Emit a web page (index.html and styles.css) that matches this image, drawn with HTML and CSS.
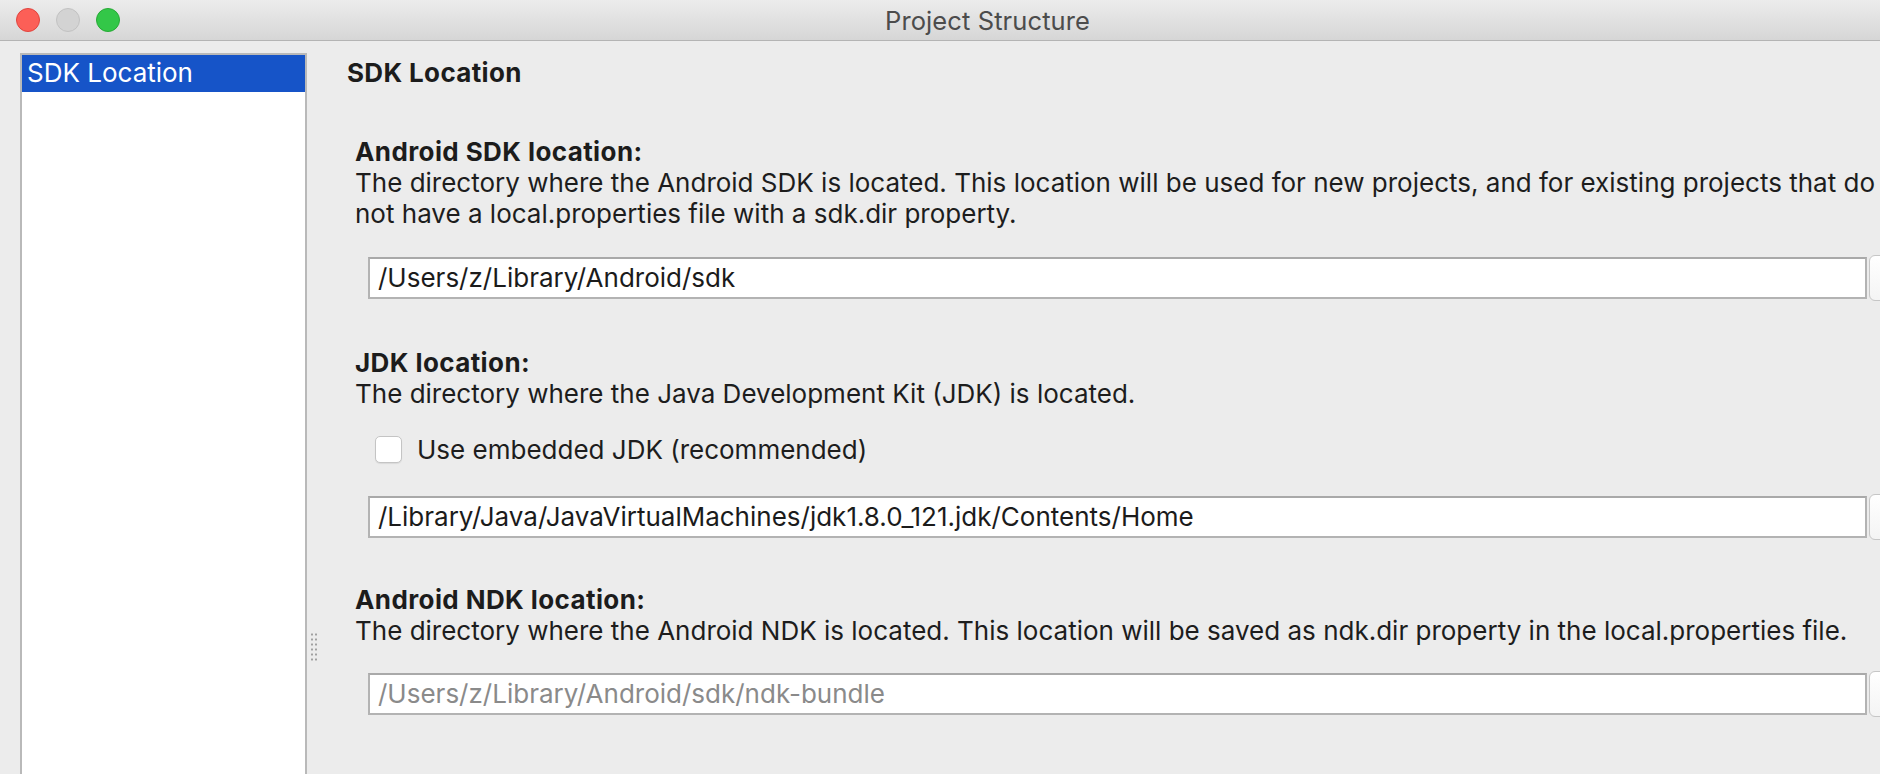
FILE: index.html
```html
<!DOCTYPE html>
<html lang="en">
<head>
<meta charset="utf-8">
<title>Project Structure</title>
<link rel="stylesheet" href="styles.css">
</head>
<body>
<div class="window">
  <header class="titlebar">
    <div class="lights">
      <span class="light light-close"></span>
      <span class="light light-min"></span>
      <span class="light light-max"></span>
    </div>
    <div class="title">Project Structure</div>
  </header>
  <div class="main">
    <aside class="sidebar">
      <div class="list-item selected">SDK Location</div>
    </aside>
    <div class="splitter"><div class="grip"></div></div>
    <section class="content">
      <h1 class="page-title">SDK Location</h1>

      <div class="group group-sdk">
        <h2 class="group-title">Android SDK location:</h2>
        <p class="group-desc">The directory where the Android SDK is located. This location will be used for new projects, and for existing projects that do<br>not have a local.properties file with a sdk.dir property.</p>
        <div class="field-row field-row-sdk">
          <div class="input">/Users/z/Library/Android/sdk</div>
          <div class="browse"></div>
        </div>
      </div>

      <div class="group group-jdk">
        <h2 class="group-title">JDK location:</h2>
        <p class="group-desc">The directory where the Java Development Kit (JDK) is located.</p>
        <label class="check-row">
          <span class="checkbox"></span>
          <span class="check-label">Use embedded JDK (recommended)</span>
        </label>
        <div class="field-row field-row-jdk">
          <div class="input">/Library/Java/JavaVirtualMachines/jdk1.8.0_121.jdk/Contents/Home</div>
          <div class="browse"></div>
        </div>
      </div>

      <div class="group group-ndk">
        <h2 class="group-title">Android NDK location:</h2>
        <p class="group-desc">The directory where the Android NDK is located. This location will be saved as ndk.dir property in the local.properties file.</p>
        <div class="field-row field-row-ndk">
          <div class="input input-muted">/Users/z/Library/Android/sdk/ndk-bundle</div>
          <div class="browse"></div>
        </div>
      </div>
    </section>
  </div>
</div>
</body>
</html>
```

FILE: styles.css
```css
* {
  box-sizing: border-box;
}

html, body {
  margin: 0;
  padding: 0;
  width: 1880px;
  height: 774px;
  overflow: hidden;
  background: #ececec;
}

body {
  font-family: Inter, "Liberation Sans", Arial, sans-serif;
  font-size: 26px;
  line-height: 31px;
  color: #1d1d1d;
}

.window {
  display: flex;
  flex-direction: column;
  width: 1880px;
  height: 774px;
}

/* ---------- Title bar ---------- */
.titlebar {
  flex: 0 0 41px;
  display: flex;
  align-items: center;
  background: linear-gradient(#ececec, #d6d6d6);
  border-bottom: 1px solid #b4b4b4;
}

.lights {
  display: flex;
  gap: 16px;
  margin-left: 16px;
  margin-top: -1px;
}

.light {
  width: 24px;
  height: 24px;
  border-radius: 50%;
}

.light-close {
  background: #fc5f57;
  border: 1px solid #e0443e;
}

.light-min {
  background: #d3d3d3;
  border: 1px solid #c2c2c2;
}

.light-max {
  background: #33c748;
  border: 1px solid #27aa35;
}

.title {
  margin-left: 765px;
  font-size: 25.5px;
  color: #4c4c4c;
  letter-spacing: 0.1px;
}

/* ---------- Main area ---------- */
.main {
  flex: 1;
  display: flex;
  min-height: 0;
}

.sidebar {
  flex: 0 0 287px;
  margin-left: 20px;
  margin-top: 12px;
  background: #ffffff;
  border: 2px solid #b9b9b9;
  border-bottom: none;
}

.list-item {
  height: 37px;
  padding-left: 5px;
  line-height: 36px;
  white-space: nowrap;
}

.list-item.selected {
  background: #1654c8;
  color: #ffffff;
}

.splitter {
  flex: 0 0 40px;
}

.grip {
  width: 9px;
  height: 31px;
  margin-top: 591px;
  margin-left: 3px;
  background-image: radial-gradient(circle, #a0a0a0 0.9px, transparent 1.3px);
  background-size: 4px 5px;
}

.content {
  flex: 0 0 1600px;
  padding-top: 16px;
}

.page-title {
  margin: 0;
  font-size: 26px;
  line-height: 31px;
  font-weight: 700;
  letter-spacing: 0.35px;
  color: #1c1c1c;
}

.group {
  padding-left: 8px;
}

.group-sdk { margin-top: 48px; }
.group-jdk { margin-top: 46px; }
.group-ndk { margin-top: 44px; }

.group-title {
  margin: 0;
  font-size: 26px;
  line-height: 31px;
  font-weight: 700;
  letter-spacing: 0.4px;
  color: #1c1c1c;
}

.group-desc {
  margin: 0;
  white-space: nowrap;
}

.field-row {
  display: flex;
  gap: 2px;
  margin-left: 13px;
}

.field-row-sdk { margin-top: 28px; }
.field-row-jdk { margin-top: 31px; }
.field-row-ndk { margin-top: 27px; }

.input {
  flex: 0 0 1499px;
  height: 42px;
  padding-left: 8px;
  line-height: 38px;
  background: #ffffff;
  border: 2px solid #b3b3b3;
  border-top-color: #a9a9a9;
  white-space: nowrap;
  overflow: hidden;
  color: #1b1b1b;
}

.input-muted {
  color: #8a8a8a;
}

.browse {
  flex: 0 0 40px;
  height: 46px;
  margin-top: -2px;
  background: linear-gradient(#ffffff, #f4f4f4);
  border: 1px solid #c6c6c6;
  border-radius: 6px;
}

.check-row {
  display: flex;
  align-items: center;
  margin-top: 25px;
  margin-left: 20px;
  height: 31px;
}

.checkbox {
  width: 27px;
  height: 27px;
  background: #ffffff;
  border: 1px solid #c4c4c4;
  border-radius: 5px;
  box-shadow: 0 1px 1px rgba(0, 0, 0, 0.08);
}

.check-label {
  margin-left: 15px;
  white-space: nowrap;
}
```
